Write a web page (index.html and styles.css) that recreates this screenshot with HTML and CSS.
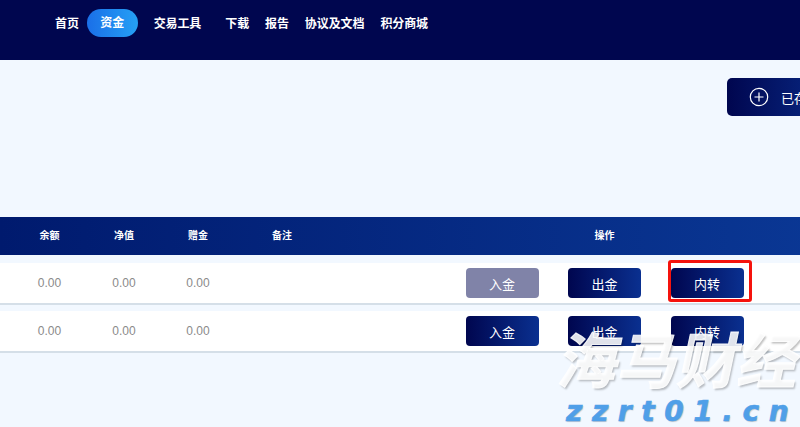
FILE: index.html
```html
<!DOCTYPE html>
<html lang="zh-CN">
<head>
    <meta charset="UTF-8">
    <meta name="viewport" content="width=device-width, initial-scale=1.0">
    <title>资金</title>
    <link rel="stylesheet" href="styles.css">
</head>
<body>
    <div class="page">
        <header class="topbar">
            <nav class="nav">
                <a class="nav-item">首页</a>
                <a class="nav-item active">资金</a>
                <a class="nav-item tools">交易工具</a>
                <a class="nav-item">下载</a>
                <a class="nav-item">报告</a>
                <a class="nav-item">协议及文档</a>
                <a class="nav-item">积分商城</a>
            </nav>
        </header>

        <div class="toolbar">
            <button class="add-btn">
                <svg class="add-icon" width="20" height="20" viewBox="0 0 20 20">
                    <circle cx="10" cy="10" r="8.7" fill="none" stroke="#fff" stroke-width="1.2"/>
                    <path d="M10 5.5v9M5.5 10h9" fill="none" stroke="#fff" stroke-width="1.2"/>
                </svg>
                已存在账户
            </button>
        </div>

        <div class="table">
            <div class="table-row table-head">
                <div class="cell">余额</div>
                <div class="cell">净值</div>
                <div class="cell">赠金</div>
                <div class="cell">备注</div>
                <div class="cell">操作</div>
            </div>
            <div class="table-row account-row">
                <div class="cell">0.00</div>
                <div class="cell">0.00</div>
                <div class="cell">0.00</div>
                <div class="cell"></div>
                <div class="cell actions">
                    <button class="action-btn disabled">入金</button>
                    <button class="action-btn">出金</button>
                    <span class="highlight-wrap">
                        <button class="action-btn">内转</button>
                        <span class="highlight"></span>
                    </span>
                </div>
            </div>
            <div class="table-row account-row">
                <div class="cell">0.00</div>
                <div class="cell">0.00</div>
                <div class="cell">0.00</div>
                <div class="cell"></div>
                <div class="cell actions">
                    <button class="action-btn">入金</button>
                    <button class="action-btn">出金</button>
                    <button class="action-btn">内转</button>
                </div>
            </div>
        </div>

        <div class="watermark">
            <div class="wm-title">海马财经</div>
            <div class="wm-url">zzrt01.cn</div>
        </div>
    </div>
</body>
</html>
```

FILE: styles.css
```css
html, body {
    margin: 0;
    padding: 0;
    height: 100%;
    overflow: hidden;
}

body {
    background: #f2f8ff;
    font-family: "Liberation Sans", "Noto Sans CJK SC", sans-serif;
}

.page {
    position: relative;
    width: 800px;
    height: 427px;
    overflow: hidden;
}

/* Top navigation */
.topbar {
    height: 60px;
    background: #00064f;
}

.nav {
    display: flex;
    align-items: center;
    gap: 16px;
    height: 45px;
    padding-left: 55px;
}

.nav-item {
    color: #fff;
    font-size: 12px;
    font-weight: bold;
    letter-spacing: -0.1px;
    white-space: nowrap;
}

.nav-item.active {
    margin-left: -8px;
    padding: 0 13.5px;
    height: 28px;
    line-height: 28px;
    border-radius: 14px;
    background: linear-gradient(90deg, #1a6fe8, #25a0f5);
}

.nav-item.tools {
    margin-right: 8px;
}

/* Toolbar */
.toolbar {
    display: flex;
    padding: 18px 0 0 727px;
    height: 157px;
    box-sizing: border-box;
}

.add-btn {
    display: flex;
    align-items: center;
    flex-shrink: 0;
    gap: 12px;
    width: 180px;
    height: 38px;
    padding: 0 0 0 22px;
    border: 0;
    border-radius: 5px;
    background: linear-gradient(90deg, #00064f, #0a3090 70%);
    color: #fff;
    font-family: inherit;
    font-size: 13px;
    white-space: nowrap;
}

/* Table */
.table {
    width: 900px;
}

.table-row {
    display: grid;
    grid-template-columns: 87px 74px 74px 94px 551px;
    text-align: center;
}

.cell:first-child {
    padding-left: 12px;
}

.table-head {
    height: 38px;
    line-height: 38px;
    margin-bottom: 8px;
    background: linear-gradient(90deg, #001a6e, #0b3a98);
    color: #fff;
    font-size: 10px;
    font-weight: bold;
}

.account-row {
    align-items: center;
    height: 40px;
    margin-bottom: 6px;
    background: #fff;
    border-bottom: 2px solid #d5dfe8;
    color: #8a8a8a;
    font-size: 12px;
}

.actions {
    display: flex;
    justify-content: center;
    gap: 29.5px;
}

.action-btn {
    display: block;
    width: 73px;
    height: 30px;
    padding: 0;
    border: 0;
    border-radius: 4px;
    background: linear-gradient(90deg, #00064f, #0a3090);
    color: #fff;
    font-family: inherit;
    font-size: 13px;
}

.action-btn.disabled {
    background: #8083a8;
}

.highlight-wrap {
    position: relative;
    display: block;
}

.highlight {
    position: absolute;
    top: -8px;
    left: -3px;
    width: 78px;
    height: 36px;
    border: 3px solid #f5130d;
    border-radius: 3px;
}

/* Watermark sits over the table */
.watermark {
    position: absolute;
    top: 329px;
    left: 560px;
    width: 240px;
    pointer-events: none;
}

.wm-title {
    color: rgba(255, 255, 255, 0.88);
    font-size: 60px;
    line-height: 68px;
    font-weight: bold;
    white-space: nowrap;
    transform: skewX(-12deg);
    text-shadow: 2px 2px 2px rgba(0, 0, 0, 0.25);
    -webkit-text-stroke: 1px rgba(255, 255, 255, 0.88);
}

.wm-url {
    margin-left: 6px;
    color: #4f9fe8;
    font-family: "DejaVu Sans", sans-serif;
    font-size: 28px;
    line-height: 30px;
    font-weight: bold;
    font-style: italic;
    letter-spacing: 9.6px;
    white-space: nowrap;
    text-shadow: 1px 1px 1px rgba(0, 0, 0, 0.2);
    -webkit-text-stroke: 0.6px #4f9fe8;
}
```
